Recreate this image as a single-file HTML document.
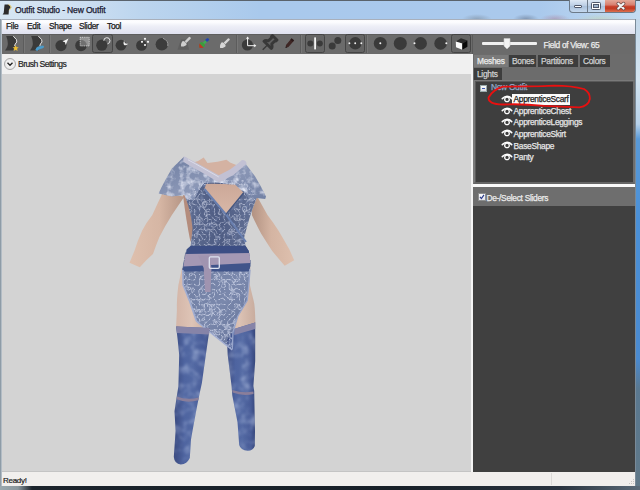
<!DOCTYPE html>
<html><head><meta charset="utf-8">
<style>
*{margin:0;padding:0;box-sizing:border-box}
html,body{width:640px;height:490px;overflow:hidden;background:#1e2a34;font-family:"Liberation Sans",sans-serif}
.a{position:absolute}
.mi,#ttl,.row,.tab,.t{-webkit-text-stroke:0.25px currentColor}
#title{left:0;top:0;width:640px;height:19px;background:linear-gradient(90deg,#d6e6f3 0,#d0e1f2 70px,#bcd5ee 140px,#a9c9ec 260px,#aac9ec 540px,#c4dcf2 640px);border-top:1px solid #5a636c}
#ttl{left:15px;top:4.8px;font-size:8.5px;color:#1a1a30;letter-spacing:-0.14px;white-space:nowrap}
#lframe{left:0;top:19px;width:2px;height:467px;background:linear-gradient(90deg,#7c8c98,#c4ccd4)}
#rframe{left:635px;top:19px;width:5px;height:471px;background:linear-gradient(90deg,#7a8a98 0,#7a8a98 1px,transparent 1px),linear-gradient(#c4d8ea 0,#d4e4f0 60px,#b8d2ea 105px,#5a9ad8 120px,#4a90d8 200px,#4a8ad0 340px,#5a7890 370px,#607888 470px)}
#bframe{left:0;top:486px;width:640px;height:4px;background:linear-gradient(90deg,#9aa8ae 0,#8a989e 18px,#1c242c 32px,#182028 400px,#2a3440 560px,#5a6a78 640px)}
#menu{left:2px;top:19px;width:633px;height:15px;background:linear-gradient(#fbfbfd 0,#fdfdff 2px,#eeeff7 6px,#dfe1ef 14px,#d8dbe9 15px);border-top:1px solid #a9b0bb}
.mi{top:21px;font-size:8.4px;color:#1a1a1a;letter-spacing:-0.3px;white-space:nowrap}
#tool{left:2px;top:34px;width:633px;height:20px;background:#6b6b6b;border-top:1px solid #5e5e5e}
#brush{left:2px;top:54px;width:470px;height:20px;background:#f0f0f0}
#view{left:2px;top:74px;width:469px;height:398px;background:#d3d3d3;border-bottom:1px solid #c4c4c4}
#vsep{left:471px;top:54px;width:2px;height:418px;background:#f4f4f4}
#rp{left:473px;top:54px;width:162px;height:418px;background:#6c6c6c}
#status{left:2px;top:472px;width:633px;height:14px;background:#f1efed}
.t{color:#e4e4e4;font-size:8.4px;letter-spacing:-0.3px;white-space:nowrap}
.tab{height:12px;background:#3d3d3d;color:#d0d0d0;font-size:8.4px;letter-spacing:-0.3px;white-space:nowrap;padding-left:3px;line-height:12px}
#tree{left:473px;top:80px;width:162px;height:104px;background:#3e3e3e;border:1px solid #7a7a7a;border-left-width:2px;border-bottom:2px solid #666;border-right:2px solid #6e6e6e;box-shadow:inset 1px 1px 0 #5a5a5a}
#wline{left:473px;top:184px;width:162px;height:3px;background:#fafafa}
#desel{left:473px;top:187px;width:162px;height:19px;background:#6e6e6e}
#rdark{left:473px;top:206px;width:162px;height:266px;background:#404040}
.row{font-size:8.4px;letter-spacing:-0.3px;color:#e8e8e8;white-space:nowrap}
</style></head><body>
<div class="a" id="title"></div>
<!-- app icon -->
<svg class="a" style="left:2px;top:4px" width="10" height="11" viewBox="0 0 10 11"><path d="M2.6 0.6 L6.2 0.6 Q8.8 1.4 8.6 3.6 Q7.2 4.8 6.9 6.2 L6.6 10.6 L0.6 10.6 Q2.2 8.6 2 6.2 Q2.2 3.2 2.6 0.6Z" fill="#2c2c2c"/><path d="M6.4 0.6 Q9.4 1.4 9.2 3.8 Q7.8 5 7.4 6.2" fill="none" stroke="#e8c85a" stroke-width="0.9"/></svg>
<div class="a" style="left:462px;top:14px;width:30px;height:5px;background:radial-gradient(ellipse at 50% 100%,rgba(110,120,130,0.45),rgba(110,120,130,0) 70%)"></div>
<div class="a" style="left:513px;top:14px;width:26px;height:5px;background:radial-gradient(ellipse at 50% 100%,rgba(80,90,110,0.45),rgba(80,90,110,0) 70%)"></div>
<div class="a" style="left:540px;top:14px;width:30px;height:5px;background:radial-gradient(ellipse at 50% 100%,rgba(170,90,110,0.35),rgba(170,90,110,0) 70%)"></div>
<div class="a" style="left:575px;top:14px;width:50px;height:5px;background:radial-gradient(ellipse at 50% 100%,rgba(200,210,140,0.35),rgba(200,210,140,0) 70%)"></div>
<div class="a" id="ttl">Outfit Studio - New Outfit</div>
<!-- window buttons -->
<div class="a" style="left:569px;top:0;width:67px;height:13px;border:1px solid #6c7a88;border-top:none;border-radius:0 0 4px 4px;background:linear-gradient(#dde8f4,#b9cde4 50%,#a9c0da 51%,#c4d8ee)"></div>
<div class="a" style="left:587px;top:0;width:1px;height:12px;background:#6c7a88"></div>
<div class="a" style="left:605px;top:0;width:1px;height:12px;background:#6c7a88"></div>
<div class="a" style="left:605px;top:0;width:30px;height:12px;border-radius:0 0 3px 0;background:linear-gradient(#e4a898,#d88070 40%,#c8402a 55%,#c23a22 70%,#dc7050)"></div>
<div class="a" style="left:574px;top:5px;width:8px;height:3px;background:#fff;border:1px solid #50586a;border-radius:1px"></div>
<div class="a" style="left:591px;top:2px;width:10px;height:8px;border:1px solid #50586a;border-radius:1.5px;background:#fff"></div><div class="a" style="left:593px;top:4px;width:6px;height:4px;border:1px solid #50586a;background:#9fb4cc"></div>
<svg class="a" style="left:615px;top:1px" width="12" height="10" viewBox="0 0 12 10"><path d="M3.2 2.6 L8.6 7.6 M8.6 2.6 L3.2 7.6" stroke="#6a4a48" stroke-width="3.4" stroke-linecap="round"/><path d="M3.2 2.6 L8.6 7.6 M8.6 2.6 L3.2 7.6" stroke="#f6f6f6" stroke-width="2" stroke-linecap="round"/></svg>

<div class="a" id="lframe"></div>
<div class="a" id="menu"></div>
<div class="a mi" style="left:6px">File</div>
<div class="a mi" style="left:27px">Edit</div>
<div class="a mi" style="left:49px">Shape</div>
<div class="a mi" style="left:79px">Slider</div>
<div class="a mi" style="left:107px">Tool</div>
<div class="a" id="tool"></div>
<div class="a" id="brush"></div>
<div class="a" id="view"></div>

<svg class="a" style="left:0;top:0" width="640" height="490" viewBox="0 0 640 490">
<defs>
<linearGradient id="skinL" x1="0" y1="0" x2="1" y2="0"><stop offset="0" stop-color="#dec0ae"/><stop offset="0.55" stop-color="#d6b6a4"/><stop offset="1" stop-color="#b49484"/></linearGradient>
<linearGradient id="skinR" x1="0" y1="0" x2="1" y2="0"><stop offset="0" stop-color="#b29282"/><stop offset="0.45" stop-color="#d4b4a2"/><stop offset="1" stop-color="#dec0ae"/></linearGradient>
<linearGradient id="thigh" x1="0" y1="0" x2="1" y2="0"><stop offset="0" stop-color="#d4b6a8"/><stop offset="0.2" stop-color="#dec4b6"/><stop offset="0.5" stop-color="#bea294"/><stop offset="0.8" stop-color="#dcc2b4"/><stop offset="1" stop-color="#c8ac9e"/></linearGradient>
<linearGradient id="keyh" x1="0" y1="0" x2="0" y2="1"><stop offset="0" stop-color="#cca898"/><stop offset="1" stop-color="#d8b8a8"/></linearGradient>
<linearGradient id="dress" x1="0" y1="0" x2="1" y2="0"><stop offset="0" stop-color="#606e92"/><stop offset="0.5" stop-color="#4e5c83"/><stop offset="1" stop-color="#647296"/></linearGradient>
<linearGradient id="cape" x1="0" y1="0" x2="1" y2="1"><stop offset="0" stop-color="#6d7ca0"/><stop offset="0.5" stop-color="#8c98b7"/><stop offset="1" stop-color="#6f7ea2"/></linearGradient>
<linearGradient id="skirt" x1="0" y1="0" x2="1" y2="1"><stop offset="0" stop-color="#6e7ca1"/><stop offset="0.5" stop-color="#7a88ac"/><stop offset="1" stop-color="#627097"/></linearGradient>
<linearGradient id="stock" x1="0" y1="0" x2="1" y2="0"><stop offset="0" stop-color="#3a4a80"/><stop offset="0.3" stop-color="#4e64a0"/><stop offset="0.55" stop-color="#5369a3"/><stop offset="0.85" stop-color="#465a96"/><stop offset="1" stop-color="#36477c"/></linearGradient>
<filter id="tex" x="0" y="0" width="1" height="1" filterUnits="objectBoundingBox"><feTurbulence type="turbulence" baseFrequency="0.2" numOctaves="2" seed="7"/><feColorMatrix values="0 0 0 0 0.85  0 0 0 0 0.88  0 0 0 0 1  0 0 0 -2.6 0.7"/><feGaussianBlur stdDeviation="0.5"/><feComposite in2="SourceGraphic" operator="in"/></filter>
<filter id="texd" x="0" y="0" width="1" height="1" filterUnits="objectBoundingBox"><feTurbulence type="fractalNoise" baseFrequency="0.18" numOctaves="2" seed="11"/><feColorMatrix values="0 0 0 0 0.2  0 0 0 0 0.26  0 0 0 0 0.45  0 0 0 -2.4 1.05"/><feGaussianBlur stdDeviation="0.5"/><feComposite in2="SourceGraphic" operator="in"/></filter>
<filter id="texs" x="0" y="0" width="1" height="1" filterUnits="objectBoundingBox"><feTurbulence type="fractalNoise" baseFrequency="0.12" numOctaves="3" seed="5"/><feColorMatrix values="0 0 0 0 0.55  0 0 0 0 0.64  0 0 0 0 0.86  0 0 0 1.2 -0.55"/><feGaussianBlur stdDeviation="0.8"/><feComposite in2="SourceGraphic" operator="in"/></filter>
<filter id="texc" x="0" y="0" width="1" height="1" filterUnits="objectBoundingBox"><feTurbulence type="fractalNoise" baseFrequency="0.15" numOctaves="3" seed="2"/><feColorMatrix values="0 0 0 0 0.86  0 0 0 0 0.88  0 0 0 0 0.98  0 0 0 2.0 -0.88"/><feGaussianBlur stdDeviation="0.6"/><feComposite in2="SourceGraphic" operator="in"/></filter>
<radialGradient id="capeHi" cx="0.5" cy="0.5" r="0.5"><stop offset="0" stop-color="#d8dcf0" stop-opacity="0.55"/><stop offset="1" stop-color="#d8dcf0" stop-opacity="0"/></radialGradient>
<clipPath id="capeClip"><use href="#capes"/></clipPath>
</defs>
<!-- arms -->
<path d="M162 194 L152.3 215 Q146 223 142.2 230.6 Q137.5 241 134.4 251 L129.5 262.7 L139.8 267.3 Q146 260 153 254 Q156 245 159.4 236.9 Q165 226 171.9 215 L184.4 196.6Z" fill="url(#skinL)"/>
<path d="M258 198 L267.5 215 Q273 222 278.4 230.6 Q284 240 289.4 249.4 L294.2 260.3 L284.7 265.8 Q278 258 272.2 251 Q267 243 261.2 233.8 Q256 224 251.9 215 L252 210.6 L256.6 198Z" fill="url(#skinR)"/>
<!-- thighs -->
<path d="M182 268 L178.4 285 Q176.5 300 176.9 310 L176.1 327 L209.7 329 L234.7 329.5 L255.4 323 Q255 305 253.6 300.6 Q251 290 249.7 284 L250.3 266.6Z" fill="url(#thigh)"/>
<!-- neck -->
<path d="M193.5 162.5 Q199 161 203.7 157.4 L207.5 163 L217.5 161.8 L226.5 159.8 L230 162.6 L237.5 165.5 L232 176 L219 182 L200 172Z" fill="#d4b2a2"/>
<!-- underarm skin -->
<path d="M183 195 L191 196 Q196 212 195 228 L190.5 242 Q186 220 183 195Z" fill="#b48c7c"/>
<g id="torso"><path d="M186 199 Q191 212 192.5 228 Q191.5 240 190.6 246 L186.7 249.4 L185 254 L182.8 266.6 L182 269.7 L250 269.7 L248.8 266.6 L250.3 263.4 L248.8 251 L245.6 246 L244 238.4 Q247 226 251.9 210.6 L256.6 198 L245 180 L200 180Z" fill="url(#dress)"/></g>
<g id="capes"><path d="M183.7 157 L200 166.8 L218.8 178 L231.2 173 L245 163 L255 176.2 Q261 186 266 196.6 L265.2 198.9 L256.6 198 L251 203 L245 192 L231 184.5 L218 182.5 L204 183 L199 190 L194 200 L186 199 L184.4 195 L171.9 196.6 L158.6 193.4 Q161 188 164 182.5 Q168 175 171.9 168.4 L175 165.5Z" fill="url(#cape)"/></g>
<g id="gskirt"><path d="M182.5 268.5 L183.1 285 L189.4 300.6 L196.4 321 L198 322.5 L232.3 350 L233 332 L237.8 316.2 L247.2 300.6 L248.8 285 L250.3 268.5Z" fill="url(#skirt)"/></g>
<g id="gstock"><path d="M176.1 326.4 L209.7 328 L205.8 355 L201.9 383 L199.5 394 L196.4 409.7 L192.5 431 L191 439.4 L189.8 458 Q187 464 180.8 464.5 Q174.5 464 173.8 457 L175.6 430.8 L174.5 411.2 L176.9 395.6 L178.4 386.2 L179.2 355 L177.7 340Z" fill="url(#stock)"/><path d="M234.7 328.8 L255.2 322.5 L255.2 361 L253.4 386 L254.2 391 L255 431 L254.8 446 Q253 450.8 247.8 450.8 Q240.5 450 239.2 445 L237.5 422.2 L232.3 395.6 L231.6 386.2 L227.7 355 L227 340Z" fill="url(#stock)"/></g>
<use href="#torso" filter="url(#texd)"/>
<use href="#torso" filter="url(#tex)" opacity="0.7"/>
<use href="#capes" filter="url(#texc)"/>
<g clip-path="url(#capeClip)"><ellipse cx="182" cy="178" rx="16" ry="13" fill="url(#capeHi)"/><ellipse cx="250" cy="180" rx="13" ry="12" fill="url(#capeHi)"/></g>
<use href="#gskirt" filter="url(#tex)" opacity="0.85"/>
<use href="#gstock" filter="url(#texs)"/>
<!-- keyhole -->
<path d="M206.2 183.9 Q220 183.6 235.3 184.8 L243.7 192.8 L225.9 214.4 L204.4 189Z" fill="url(#keyh)"/>
<!-- wrap V accent -->
<path d="M204.4 189 L225.9 214.4 L246 242" fill="none" stroke="#6a80b0" stroke-width="2"/>
<path d="M243.7 192.8 L225.9 214.4" fill="none" stroke="#44557f" stroke-width="1.4"/>
<g fill="none" stroke="#dfe4f2" stroke-width="1.1" opacity="0.4"><path d="M202.5 203 Q204.5 200.5 206.5 203 Q207 206 204.5 208 Q202 206 202.5 203Z M205 210 Q208 212 206.5 216 Q209 219 207 222"/><path d="M242.5 207.5 Q244.6 205 246.6 207.5 Q247 210.5 244.6 212.5 Q242 210.5 242.5 207.5Z M241 215 Q238.5 218 240.5 221"/><path d="M211 224 Q214.5 221 217 225 Q214 229 211 226"/></g>
<!-- collar -->
<path d="M183.7 156.3 Q186.5 157.2 188.5 158.8 Q196 162.5 203 166.5 L218.8 175.3 L230 169.5 L238 163.5 L242 160 Q246.5 160 246.6 163.8 L233.5 175 L219 182.5 L202 172.5 Q192 167.5 183.2 161.8Z" fill="#c2c1d4"/>
<path d="M188 159.8 Q196 164 203 168 L218.8 177" fill="none" stroke="#dcdce8" stroke-width="1"/>
<!-- belt -->
<path d="M190.6 246 L245.6 246 L248.8 251 L249.5 256 L186 256 L186.7 249.4Z" fill="#3c4e84"/>
<path d="M184 262 L250.5 260 L250.5 266 L248.8 271.5 L182.5 271.5Z" fill="#40548a"/>
<path d="M185.5 254 L249.5 253 L250.3 263 L183.4 266.5 Z" fill="#a498b4"/>
<path d="M198 255.5 L209.4 255.5 L211.5 268 L210.5 292 L205 292 L203.7 268Z" fill="#a094b0"/>
<rect x="209.3" y="256.8" width="10" height="11.5" rx="1.2" fill="none" stroke="#dde2f0" stroke-width="1.3"/>
<path d="M250 270 L248.8 285 L247.2 300.6 L237.8 316.2 L233 332 L232.3 349" fill="none" stroke="#98a6cc" stroke-width="1.3"/>
<path d="M182.8 270 L183.1 285 L189.4 300.6 L196.4 321 L198 322.5 L232.3 350" fill="none" stroke="#a2aed2" stroke-width="1.6" stroke-linejoin="round"/>
<!-- stocking bands -->
<path d="M176.1 326.4 L209.7 328 L209.1 334.5 L176.9 333Z" fill="#8684a8"/>
<path d="M234.7 328.8 L255.2 322.5 L255.2 329 L234.2 335Z" fill="#8684a8"/>
<path d="M177 396.5 Q187 400.5 198.8 397.5 L198.3 400.3 Q187 403.6 176.6 399.3Z" fill="#8a7e9a"/>
<path d="M232.3 390 Q243 393.5 253.4 391.5 L253.6 394 Q243 396.5 232.5 392.6Z" fill="#8a7e9a"/>
</svg>

<div class="a" id="vsep"></div>
<div class="a" id="rp"></div>
<svg class="a" style="left:0;top:34px" width="475" height="20" viewBox="0 34 475 20">
<g fill="#3a3a3a">
<!-- separators -->
<rect x="23" y="35" width="1" height="18" fill="#5c5c5c"/><rect x="24" y="35" width="1" height="18" fill="#777"/>
<rect x="49" y="35" width="1" height="18" fill="#5c5c5c"/><rect x="50" y="35" width="1" height="18" fill="#777"/>
<rect x="236" y="35" width="1" height="18" fill="#5c5c5c"/><rect x="237" y="35" width="1" height="18" fill="#777"/>
<rect x="300" y="35" width="1" height="18" fill="#5c5c5c"/><rect x="301" y="35" width="1" height="18" fill="#777"/>
<rect x="366" y="35" width="1" height="18" fill="#5c5c5c"/><rect x="367" y="35" width="1" height="18" fill="#777"/>
<rect x="472" y="35" width="1" height="19" fill="#5a5a5a"/>
<!-- selected frames -->
<rect x="92.5" y="34.5" width="20" height="18" rx="2" fill="#656565" stroke="#454545"/>
<rect x="305.5" y="34.5" width="19" height="18" rx="2" fill="#656565" stroke="#454545"/>
<rect x="345.5" y="34.5" width="19" height="18" rx="2" fill="#656565" stroke="#454545"/>
<rect x="451.5" y="34.5" width="19" height="18" rx="2" fill="#656565" stroke="#454545"/>
<!-- icon1 body+star -->
<path d="M6.2 36 L12.9 36 Q17.5 40 16.8 41.8 Q14.5 44 14.5 46 L13.3 50.6 L5 50.6 Q8.2 46 7.8 43.2 Q7.6 39.5 6.2 36Z"/>
<path d="M13.3 36.2 Q17.8 40 16.8 42 Q14.7 44 14.6 46" fill="none" stroke="#f0f0f0" stroke-width="0.9"/>
<path d="M15.6 45.1 L16.5 47.2 L18.7 47.3 L17 48.7 L17.6 50.9 L15.6 49.7 L13.7 50.9 L14.3 48.7 L12.6 47.3 L14.8 47.2Z" fill="#f0c030"/>
<!-- icon2 body+blue -->
<path d="M31.2 36 L38 36 Q42.7 40 42 41.8 Q39.8 44 39.6 46 L38.5 50.6 L30 50.6 Q33.2 46 32.8 43.2 Q32.6 39.5 31.2 36Z"/>
<path d="M38.4 36.2 Q43 40 42 42 Q39.9 44 39.8 46" fill="none" stroke="#f0f0f0" stroke-width="0.9"/>
<path d="M35.8 50 Q36 46.8 40 46.5 Q42 45.8 43.6 46.2 Q44 48 41.5 48.3 Q38.5 48.6 37.5 50.4Z" fill="#4a9ccc" stroke="#4a9ccc" stroke-width="0.8"/>
<!-- icon3 circle arrow -->
<circle cx="61" cy="45.6" r="5.6"/>
<path d="M68.5 38.5 L62.5 41.5 L65 42.3 L65.6 45 Z" fill="#f4f4f4"/>
<!-- icon4 circle dotted square -->
<circle cx="81" cy="45.5" r="5.8"/>
<rect x="80.2" y="37.3" width="9" height="8.6" fill="rgba(255,255,255,0.28)" stroke="#d8d8d8" stroke-width="0.9" stroke-dasharray="1 0.8"/>
<!-- icon5 circle ring -->
<circle cx="101.8" cy="45.2" r="5.6"/>
<path d="M103.8 40.8 A3.1 3.1 0 1 1 107.5 43.8" fill="none" stroke="#f4f4f4" stroke-width="0.9"/>
<!-- icon6 crescent -->
<circle cx="121" cy="45.2" r="5.4"/>
<path d="M124.2 40.3 Q124.2 44.6 128.3 43.6 Q126.6 46 124 44.9 Q122.9 42.8 124.2 40.3Z" fill="#f0f0f0"/>
<!-- icon7 dots -->
<circle cx="141.5" cy="45.4" r="5.4"/>
<g fill="#f4f4f4"><circle cx="145" cy="38.8" r="1.1"/><circle cx="142" cy="41.8" r="1.1"/><circle cx="148" cy="41.8" r="1.1"/><circle cx="145" cy="45" r="1.1"/></g>
<!-- icon8 soft circle -->
<circle cx="161.8" cy="44.3" r="6.2" fill="#3c3c3c"/>
<path d="M163 38.3 Q168.6 40.5 167.8 46" fill="none" stroke="#9a9a9a" stroke-width="1"/>
<!-- icon9 brush grey -->
<path d="M177.5 49.8 L181 39.5 L187 39.5 L189 49.8Z" fill="#5f5f5f"/>
<g transform="translate(184,43.6) rotate(45) scale(0.85)"><path d="M0 4.8 C2.4 3.2 3.2 1 3.2 -0.8 C3.2 -2.8 -3.2 -2.8 -3.2 -0.8 C-3.2 1 -2.4 3.2 0 4.8Z" fill="#cfcfcf"/><path d="M-1.4 -2.6 L-1.4 -10 Q0 -11.4 1.4 -10 L1.4 -2.6Z" fill="#cfcfcf"/></g>
<!-- icon10 color brush -->
<g transform="translate(202.3,44.8) rotate(45) scale(0.88)"><path d="M0 4.8 C2.4 3.2 3.2 1 3.2 -0.8 C3.2 -2.8 -3.2 -2.8 -3.2 -0.8 C-3.2 1 -2.4 3.2 0 4.8Z" fill="#3c9c3c"/><path d="M0 4.8 C2.4 3.2 3.2 1.5 3.2 1.2 L-3.2 1.2 C-3.2 1.5 -2.4 3.2 0 4.8Z" fill="#b83828"/><path d="M-1.4 -2.4 L-1.4 -9.5 Q0 -10.8 1.4 -9.5 L1.4 -2.4Z" fill="#3cae50"/><path d="M-1.6 -6 L-1.6 -9.5 Q0 -10.8 1.6 -9.5 L1.6 -6Z" fill="#2a40b0"/></g>
<!-- icon11 brush light -->
<g transform="translate(223,45) rotate(45) scale(0.85)"><path d="M0 4.8 C2.4 3.2 3.2 1 3.2 -0.8 C3.2 -2.8 -3.2 -2.8 -3.2 -0.8 C-3.2 1 -2.4 3.2 0 4.8Z" fill="#d6d6d6"/><path d="M-1.4 -2.6 L-1.4 -10 Q0 -11.4 1.4 -10 L1.4 -2.6Z" fill="#d6d6d6"/></g>
<!-- icon12 axes -->
<circle cx="247.4" cy="45" r="5.6"/>
<path d="M247.6 37.4 L247.6 45.7 L255.4 45.7" fill="none" stroke="#f4f4f4" stroke-width="1"/>
<path d="M246 38.8 L247.6 36.6 L249.2 38.8Z M254.2 44.1 L256.3 45.7 L254.2 47.3Z" fill="#f4f4f4"/>
<!-- icon13 pin -->
<g transform="translate(269.5,43) rotate(45)">
<path d="M-3.2 -7.4 L3.2 -7.4 L3.2 -6 L2.3 -5.2 L2.3 -0.8 Q5.2 0.6 5.2 2.6 L-5.2 2.6 Q-5.2 0.6 -2.3 -0.8 L-2.3 -5.2 L-3.2 -6Z" fill="#606060" stroke="#383838" stroke-width="2.8" stroke-linejoin="round"/>
<path d="M0 3 L0 9.6" stroke="#383838" stroke-width="1.4"/>
</g>
<!-- icon14 pencil -->
<g transform="translate(289.3,43.6) rotate(40)"><path d="M-1.6 -5.2 L1.6 -5.2 L1.6 3.2 L0 5.8 L-1.6 3.2Z" fill="#3e2624"/><rect x="-1.6" y="-5.6" width="3.2" height="2" fill="#2a1a1a"/><path d="M-0.7 4.3 L0.7 4.3 L0 5.9Z" fill="#1a1a1a"/></g>
<!-- icon15 split -->
<circle cx="310.3" cy="43.4" r="3"/><circle cx="319.8" cy="43.4" r="3"/>
<rect x="314.2" y="37.4" width="1.8" height="12" fill="#f4f4f4"/>
<!-- icon16 two circles -->
<circle cx="332.2" cy="45.9" r="3.5"/><circle cx="337.8" cy="40.4" r="3.5"/>
<!-- icon17 three dots -->
<circle cx="355.3" cy="43.3" r="6.2"/>
<g fill="#f4f4f4"><circle cx="349.4" cy="43.2" r="0.95"/><circle cx="355.2" cy="43.2" r="0.95"/><circle cx="361.3" cy="43.2" r="0.95"/></g>
<!-- icon18-21 -->
<circle cx="380.3" cy="43.4" r="6.5"/><circle cx="380.3" cy="43.2" r="1" fill="#f4f4f4"/>
<circle cx="400.3" cy="43.4" r="6.5"/>
<circle cx="420.6" cy="43.4" r="6.3"/><circle cx="414.5" cy="43.2" r="1" fill="#f4f4f4"/>
<circle cx="440.6" cy="43.4" r="6.3"/><circle cx="446.3" cy="43.2" r="1" fill="#f4f4f4"/>
<!-- icon22 cube -->
<path d="M455.8 41.4 L461 38.3 L467.4 40.6 L462.3 43.5Z" fill="#2c2c2c"/>
<path d="M455.8 41.4 L462.3 43.5 L462.3 49.8 L456 47.2Z" fill="#fafafa"/>
<path d="M462.3 43.5 L467.4 40.6 L467.4 46.8 L462.3 49.8Z" fill="#0a0a0a"/>
</g>
</svg>
<!-- slider -->
<div class="a" style="left:482px;top:42px;width:55px;height:3px;background:#f0f0f0;border-radius:1px"></div>
<svg class="a" style="left:503px;top:38px" width="8" height="12" viewBox="0 0 8 12"><path d="M1 0.5 L7 0.5 L7 8 L4 11 L1 8Z" fill="#f2f2f2" stroke="#c8c8c8" stroke-width="0.6"/></svg>
<div class="a t" style="left:543.5px;top:40px;font-size:8.4px;letter-spacing:-0.35px;color:#ececec">Field of View: 65</div>


<!-- brush settings -->
<div class="a" style="left:4px;top:58px;width:12px;height:12px;border-radius:50%;border:1px solid #a8a8a8;background:radial-gradient(#fafafa,#e2e2e2)"></div>
<svg class="a" style="left:6px;top:60px" width="8" height="8" viewBox="0 0 8 8"><path d="M1.5 2.8 L4 5.2 L6.5 2.8" fill="none" stroke="#222" stroke-width="1.4"/></svg>
<div class="a" style="left:18px;top:59px;font-size:8.6px;letter-spacing:-0.55px;-webkit-text-stroke:0.2px #1e1e1e;color:#1e1e1e;white-space:nowrap">Brush Settings</div>

<!-- right panel -->
<div class="a tab" style="left:474px;top:55px;width:34px;background:#7a7a7a;color:#ececec">Meshes</div>
<div class="a tab" style="left:509px;top:55px;width:27px">Bones</div>
<div class="a tab" style="left:538px;top:55px;width:40px">Partitions</div>
<div class="a tab" style="left:580px;top:55px;width:30px">Colors</div>
<div class="a tab" style="left:474px;top:68px;width:28px">Lights</div>
<div class="a" id="tree"></div>

<div class="a" style="left:480px;top:85px;width:7px;height:7px;background:linear-gradient(#fdfdfd,#dcdce4);border:1px solid #9aa"></div>
<div class="a" style="left:482px;top:88px;width:3px;height:1px;background:#3b5bb0"></div>
<div class="a row" style="left:491px;top:82px;color:#94a8c8">New Outfit</div>
<div class="a" style="left:512px;top:94px;width:58px;height:11px;background:#fbfbfb"></div>
<svg class="a" style="left:501px;top:95px" width="12" height="8" viewBox="0 0 12 8"><path d="M1.3 3.6 Q6 -1.2 10.7 3.6" fill="none" stroke="#fff" stroke-width="1.6" stroke-linecap="round"/><circle cx="6" cy="4.4" r="2.3" fill="#3e3e3e" stroke="#fff" stroke-width="1.3"/></svg>
<div class="a row" style="left:513.5px;top:94.3px;color:#1a1a1a">ApprenticeScarf</div>
<svg class="a" style="left:501px;top:107px" width="12" height="8" viewBox="0 0 12 8"><path d="M1.3 3.6 Q6 -1.2 10.7 3.6" fill="none" stroke="#fff" stroke-width="1.6" stroke-linecap="round"/><circle cx="6" cy="4.4" r="2.3" fill="#3e3e3e" stroke="#fff" stroke-width="1.3"/></svg>
<div class="a row" style="left:513.5px;top:105.8px;color:#e6e6e6">ApprenticeChest</div>
<svg class="a" style="left:501px;top:118px" width="12" height="8" viewBox="0 0 12 8"><path d="M1.3 3.6 Q6 -1.2 10.7 3.6" fill="none" stroke="#fff" stroke-width="1.6" stroke-linecap="round"/><circle cx="6" cy="4.4" r="2.3" fill="#3e3e3e" stroke="#fff" stroke-width="1.3"/></svg>
<div class="a row" style="left:513.5px;top:117.3px;color:#e6e6e6">ApprenticeLeggings</div>
<svg class="a" style="left:501px;top:129px" width="12" height="8" viewBox="0 0 12 8"><path d="M1.3 3.6 Q6 -1.2 10.7 3.6" fill="none" stroke="#fff" stroke-width="1.6" stroke-linecap="round"/><circle cx="6" cy="4.4" r="2.3" fill="#3e3e3e" stroke="#fff" stroke-width="1.3"/></svg>
<div class="a row" style="left:513.5px;top:128.8px;color:#e6e6e6">ApprenticeSkirt</div>
<svg class="a" style="left:501px;top:141px" width="12" height="8" viewBox="0 0 12 8"><path d="M1.3 3.6 Q6 -1.2 10.7 3.6" fill="none" stroke="#fff" stroke-width="1.6" stroke-linecap="round"/><circle cx="6" cy="4.4" r="2.3" fill="#3e3e3e" stroke="#fff" stroke-width="1.3"/></svg>
<div class="a row" style="left:513.5px;top:140.5px;color:#e6e6e6">BaseShape</div>
<svg class="a" style="left:501px;top:153px" width="12" height="8" viewBox="0 0 12 8"><path d="M1.3 3.6 Q6 -1.2 10.7 3.6" fill="none" stroke="#fff" stroke-width="1.6" stroke-linecap="round"/><circle cx="6" cy="4.4" r="2.3" fill="#3e3e3e" stroke="#fff" stroke-width="1.3"/></svg>
<div class="a row" style="left:513.5px;top:151.8px;color:#e6e6e6">Panty</div>
<svg class="a" style="left:480px;top:80px" width="120" height="35" viewBox="480 80 120 35"><path d="M544 86.2 L503 86.7 Q493 89.5 488.6 97.5 Q487.6 104.2 503 104.5 Q522 103.6 544 105.9 Q562 106.8 579.4 107.3 Q588.5 106 589.8 99 Q590.2 92.5 584 89 Q572 85.8 554 85.7 L538 86.3" fill="none" stroke="#e81010" stroke-width="1.8"/></svg>
<div class="a" id="wline"></div>
<div class="a" id="desel"></div>
<div class="a" id="rdark"></div>
<div class="a" style="left:478px;top:193px;width:8px;height:8px;background:linear-gradient(#fdfdfd,#e4e4ec);border:1px solid #8e8f8f"></div>
<svg class="a" style="left:478px;top:193px" width="8" height="8" viewBox="0 0 8 8"><path d="M2 3.8 L3.4 5.6 L6 1.8" fill="none" stroke="#2a3a8a" stroke-width="1.2"/></svg>
<div class="a row" style="left:486.5px;top:192.5px;color:#ececec">De-/Select Sliders</div>

<div class="a" id="status"></div>
<div class="a" style="left:551px;top:473px;width:1px;height:12px;background:#dcdad8"></div>
<div class="a" style="left:3px;top:475.5px;font-size:8px;-webkit-text-stroke:0.2px #1a1a1a;letter-spacing:-0.3px;color:#1a1a1a">Ready!</div>
<svg class="a" style="left:627px;top:479px" width="8" height="7" viewBox="0 0 8 7"><g fill="#c8c6c4"><rect x="6" y="0" width="1" height="1"/><rect x="4" y="2" width="1" height="1"/><rect x="6" y="2" width="1" height="1"/><rect x="2" y="4" width="1" height="1"/><rect x="4" y="4" width="1" height="1"/><rect x="6" y="4" width="1" height="1"/></g></svg>
<div class="a" id="rframe"></div>
<div class="a" id="bframe"></div>
</body></html>
